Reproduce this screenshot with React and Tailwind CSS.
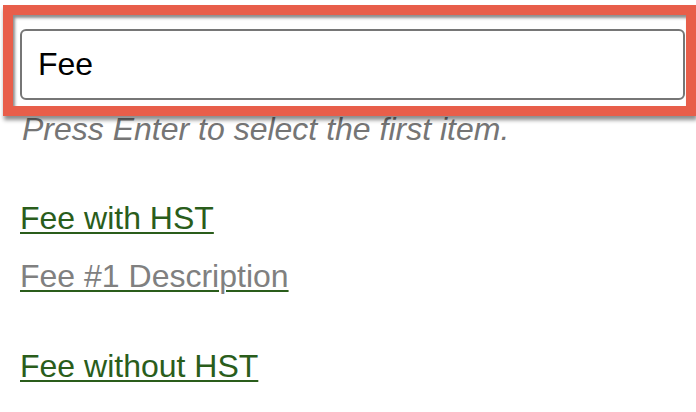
import React from "react";

const fees = [
  { title: "Fee with HST", description: "Fee #1 Description" },
  { title: "Fee without HST", description: "Fee #2 Description" },
];

const App = () => {
  return (
    <div
      className="relative w-[696px] h-[412px] overflow-hidden bg-white"
      style={{ fontFamily: '"Liberation Sans", Arial, sans-serif' }}
    >
      <div className="pl-[20px] pt-[29px] pr-[11px]">
        {/* Search field */}
        <input
          type="text"
          defaultValue="Fee"
          className="w-[665px] h-[71px] rounded-[6px] border-2 border-[#767676] bg-white pl-[16px] text-[32px] text-black outline-none"
        />
        <p className="mt-[11px] pl-[2px] text-[32px] leading-[36px] italic text-[#757575]">
          Press Enter to select the first item.
        </p>

        {/* Results */}
        <ul className="mt-[53px] flex flex-col gap-[54px]">
          {fees.map((fee) => (
            <li key={fee.title}>
              <a
                href="#"
                className="block text-[32px] leading-[36px] text-[#2a5d1b] underline decoration-2 underline-offset-[3px]"
              >
                <span className="block">{fee.title}</span>
                <span className="block mt-[22px] text-[#808080]">{fee.description}</span>
              </a>
            </li>
          ))}
        </ul>
      </div>

      {/* Annotation box over the search field */}
      <div className="absolute left-[3px] top-[5px] w-[693px] h-[111px] border-[10px] border-[#e85e4a] shadow-[1px_4px_4px_rgba(0,0,0,0.45),inset_2px_3px_3px_rgba(0,0,0,0.45)] pointer-events-none" />
    </div>
  );
};

export default App;
